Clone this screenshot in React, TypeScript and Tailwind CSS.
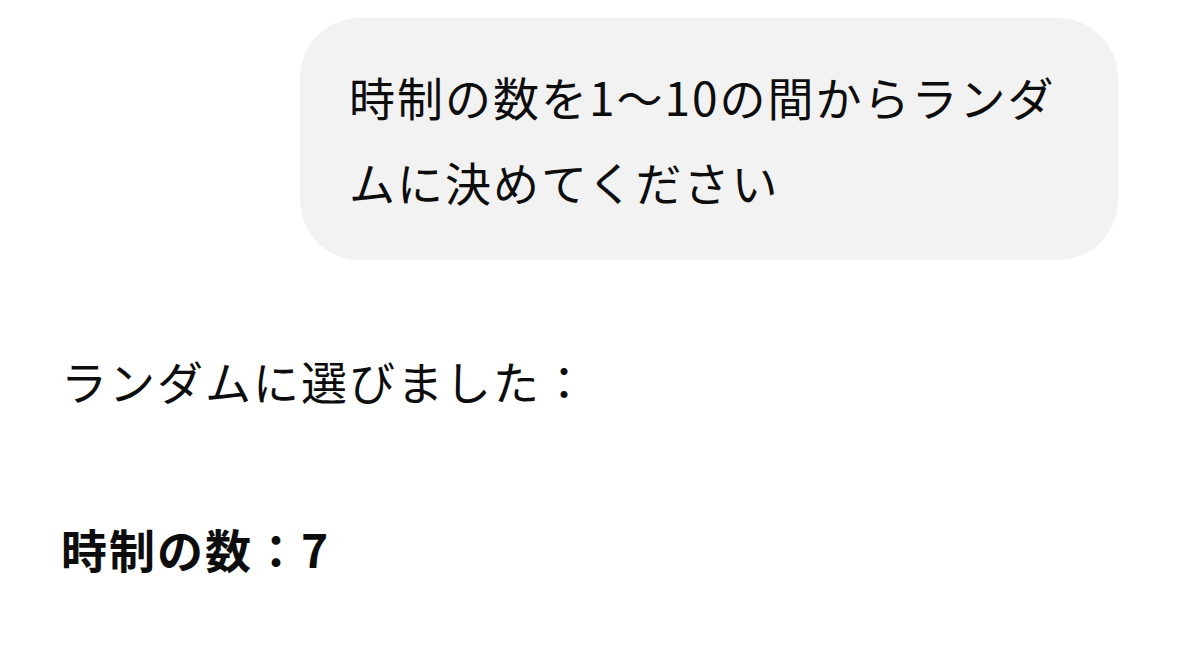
export default function App() {
  return (
    <div
      className="min-h-screen bg-white px-[61px] pt-[18px] text-[#0d0d0d]"
      style={{ fontFamily: '"Noto Sans CJK JP", "Noto Sans", sans-serif' }}
    >
      {/* User message */}
      <div className="flex justify-end">
        <div className="w-[818px] rounded-[60px] bg-[#f2f2f2] py-[36px] pl-[49px] pr-[40px] text-[46px] leading-[85px] tracking-[2px]">
          時制の数を1〜10の間からランダムに決めてください
        </div>
      </div>

      {/* Assistant reply */}
      <div className="mt-[78px] text-[46px] leading-[85px] tracking-[2px]">
        <p>ランダムに選びました：</p>
        <p className="mt-[83px] font-bold">時制の数：7</p>
      </div>
    </div>
  );
}
